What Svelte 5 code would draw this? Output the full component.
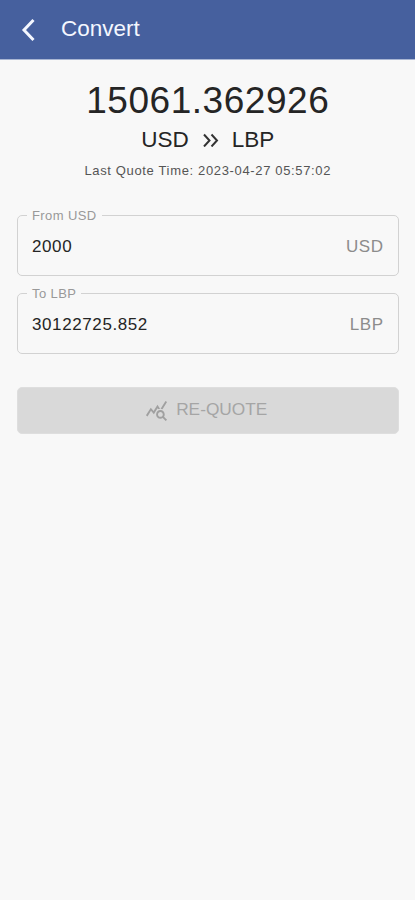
<script>
	let rate = '15061.362926';
	let from = 'USD';
	let to = 'LBP';
	let quoteTime = '2023-04-27 05:57:02';

	let fields = [
		{ label: 'From', currency: from, value: '2000' },
		{ label: 'To', currency: to, value: '30122725.852' }
	];
</script>

<div class="page">
	<header class="app-bar">
		<button class="back" aria-label="Back">
			<svg width="14" height="24" viewBox="0 0 14 24">
				<path d="M12.500 2 3 12l9.500 10" />
			</svg>
		</button>
		<h1>Convert</h1>
	</header>

	<main>
		<section class="quote">
			<div class="rate">{rate}</div>
			<div class="pair">
				<span>{from}</span>
				<svg width="17" height="14" viewBox="0 0 17 14">
					<path d="M2 1.500 7.500 7.500 2 13.500M9.500 1.500 15 7.500l-5.500 6" />
				</svg>
				<span>{to}</span>
			</div>
			<div class="time">Last Quote Time: {quoteTime}</div>
		</section>

		<form>
			{#each fields as field}
				<fieldset class="field">
					<legend>{field.label} {field.currency}</legend>
					<div class="field-row">
						<span class="value">{field.value}</span>
						<span class="currency">{field.currency}</span>
					</div>
				</fieldset>
			{/each}

			<button class="requote" type="button" disabled>
				<svg width="23" height="23" viewBox="0 0 24 24">
					<path d="M19.880 18.470c.44-.7.7-1.510.7-2.390 0-2.490-2.010-4.500-4.500-4.500s-4.500 2.010-4.500 4.500 2.010 4.500 4.490 4.500c.88 0 1.700-.26 2.390-.7L21.580 23 23 21.580l-3.120-3.110zm-3.800.11c-1.380 0-2.500-1.120-2.500-2.500s1.120-2.500 2.500-2.500 2.500 1.120 2.500 2.500-1.120 2.500-2.500 2.500zm-.36-8.500c-.74.02-1.450.18-2.100.45l-.55-.83-3.800 6.180-3.010-3.520-3.630 5.810L1 17l5-8 3 3.500L13 6l2.720 4.080zm2.590.5c-.64-.28-1.330-.45-2.050-.49L21.380 2 23 3.180l-4.690 7.400z" />
				</svg>
				<span>RE-QUOTE</span>
			</button>
		</form>
	</main>
</div>

<style>
	:global(body) {
		background: #f8f8f8;
	}

	.page {
		min-height: 100vh;
		background: #f8f8f8;
		color: #252525;
		font-family: 'Liberation Sans', Arial, sans-serif;
	}

	.app-bar {
		display: flex;
		align-items: center;
		box-sizing: border-box;
		height: 60px;
		padding-left: 21px;
		background: #46609e;
		border-bottom: 1px solid #a9b6d3;
		color: #f4f7ff;
	}

	.back {
		display: flex;
		padding: 0;
		border: 0;
		background: none;
	}

	.back path {
		fill: none;
		stroke: #f4f7ff;
		stroke-width: 3;
	}

	h1 {
		margin: -1px 0 0 26px;
		font-size: 22.5px;
		font-weight: 400;
		line-height: 26px;
	}

	main {
		padding: 20px 16.5px 0 17px;
	}

	.quote {
		text-align: center;
	}

	.rate {
		font-size: 37px;
		line-height: 42px;
		letter-spacing: 0.55px;
	}

	.pair {
		display: flex;
		justify-content: center;
		align-items: center;
		gap: 13px;
		font-size: 22.5px;
		line-height: 26px;
		margin-top: 5px;
	}

	.pair path {
		fill: none;
		stroke: #333;
		stroke-width: 2;
	}

	.time {
		margin-top: 10px;
		font-size: 13px;
		line-height: 16px;
		letter-spacing: 0.65px;
		color: #555;
	}

	form {
		margin-top: 28px;
	}

	.field {
		box-sizing: border-box;
		height: 69px;
		margin: 0 0 9px;
		padding: 0 14px 0 9px;
		border: 1.5px solid #d2d2d2;
		border-radius: 5px;
	}

	legend {
		padding: 0 5px;
		font-size: 13px;
		line-height: 17px;
		letter-spacing: 0.4px;
		color: #999;
	}

	.field-row {
		display: flex;
		justify-content: space-between;
		padding: 13px 0 0 5px;
		font-size: 17px;
		line-height: 20px;
	}

	.value {
		letter-spacing: 0.6px;
	}

	.currency {
		letter-spacing: 0.5px;
		color: #8c8c8c;
	}

	.requote {
		display: flex;
		justify-content: center;
		align-items: center;
		gap: 8px;
		box-sizing: border-box;
		width: 100%;
		height: 47px;
		margin-top: 33px;
		padding: 0 3px 2px 0;
		border: 1px solid #dedede;
		border-radius: 5px;
		background: #d9d9d9;
		color: #a5a5a5;
		font-family: inherit;
		font-size: 17.3px;
	}

	.requote svg {
		margin-top: 2px;
		fill: #a0a0a0;
	}
</style>
